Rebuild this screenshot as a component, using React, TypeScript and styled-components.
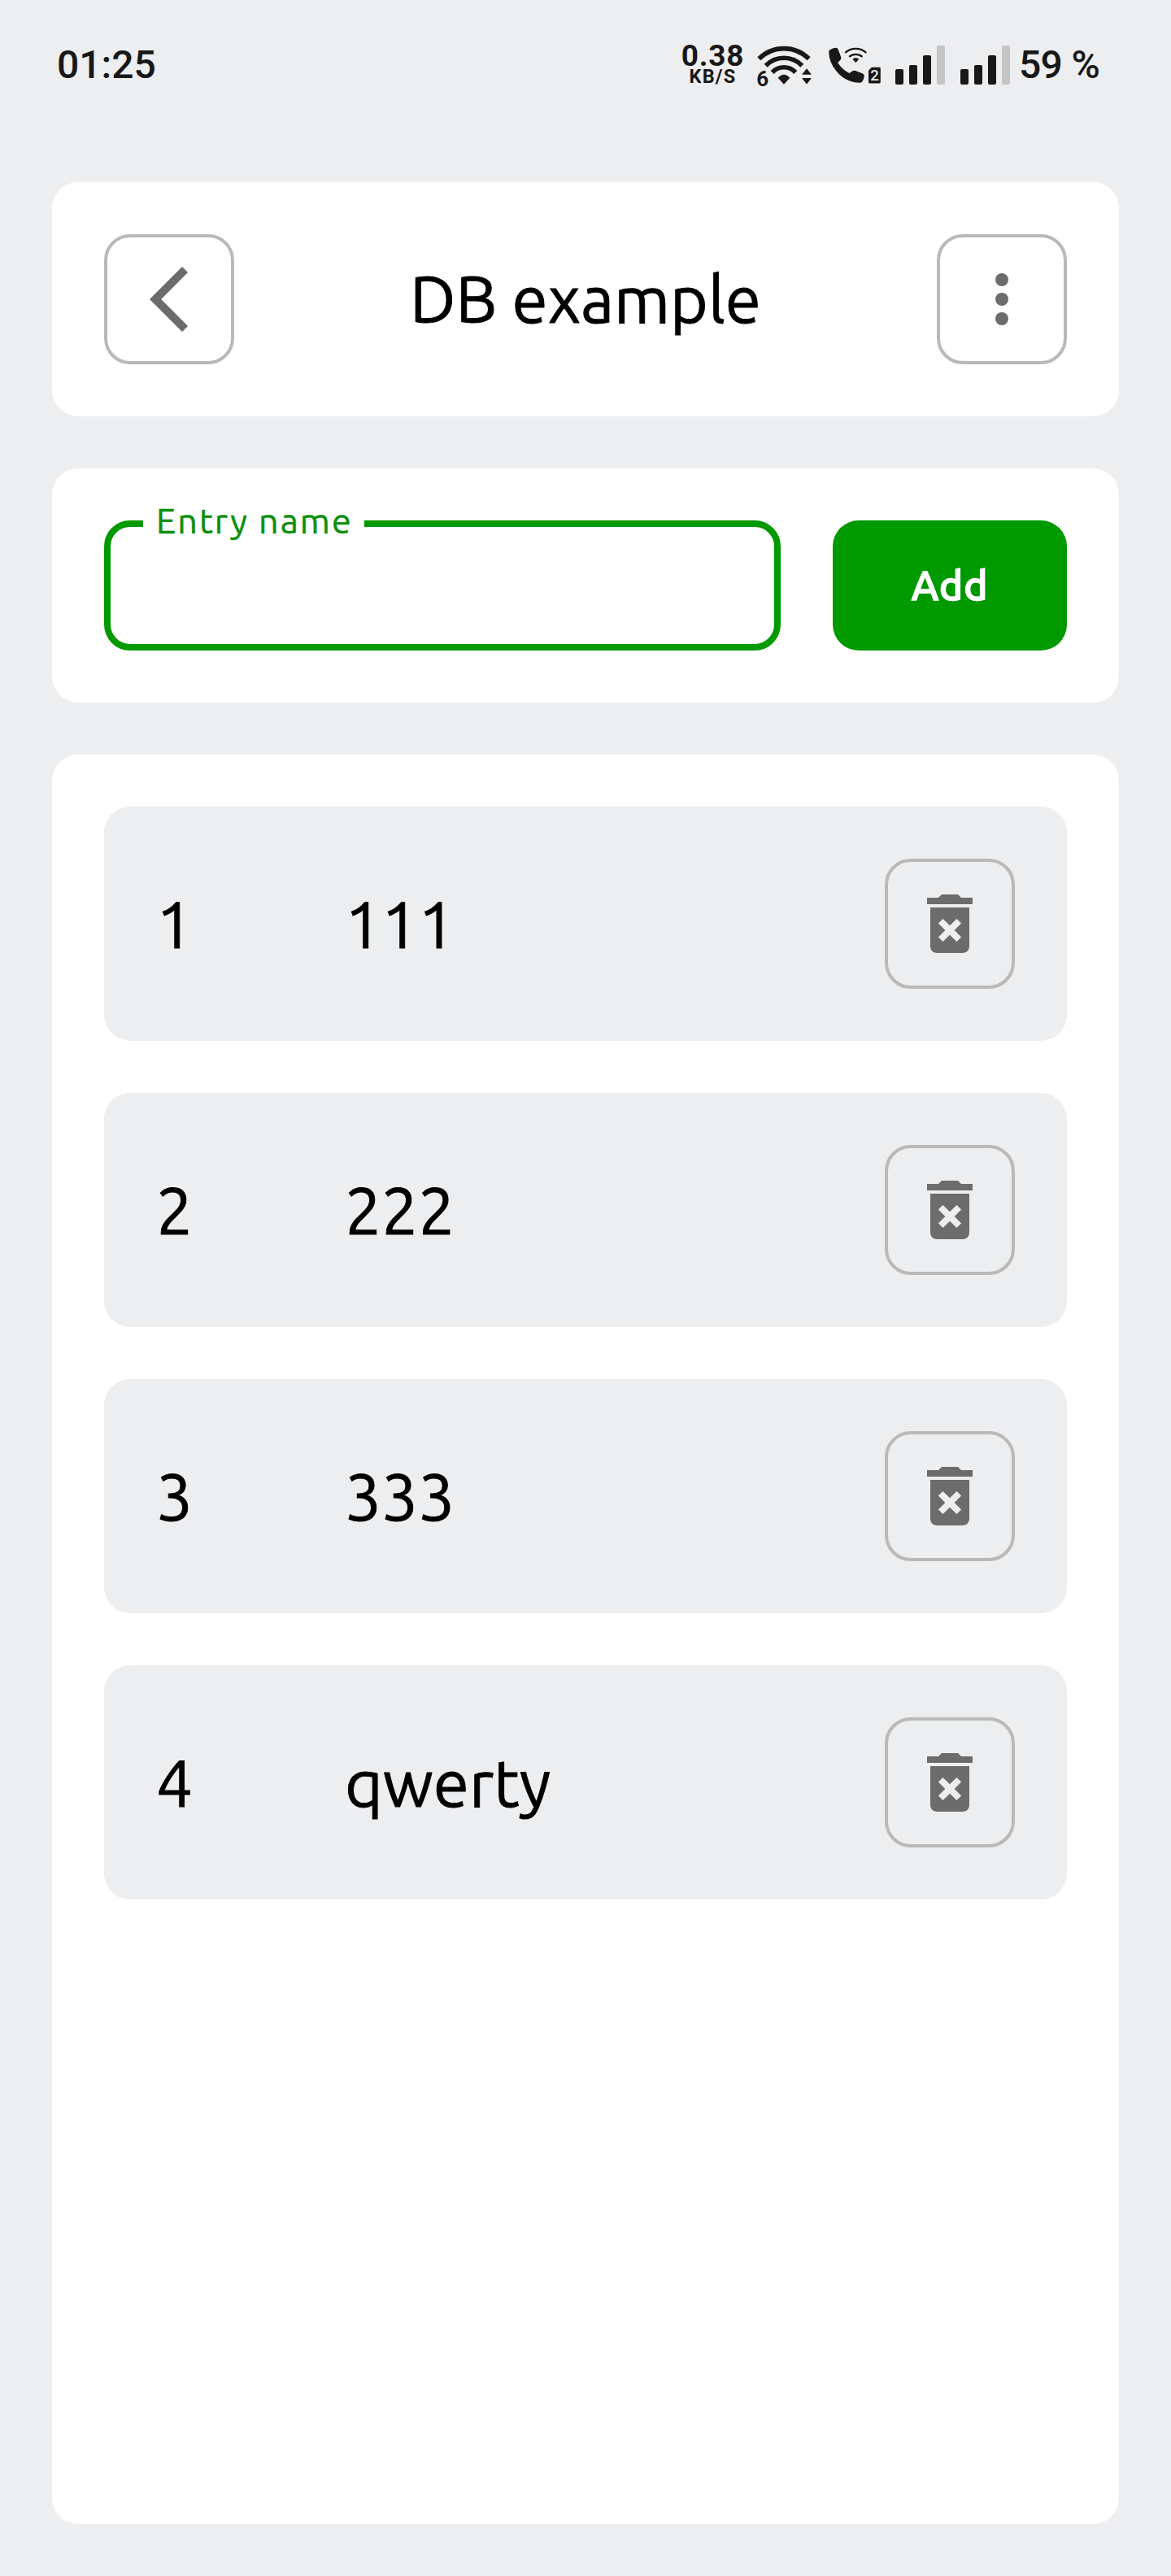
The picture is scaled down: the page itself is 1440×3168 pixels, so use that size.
import React from "react";
import styled, { createGlobalStyle } from "styled-components";

const color = {
  page: "#edeef0",
  card: "#ffffff",
  ink: "#181818",
  text: "#000000",
  outline: "#b9b9b9",
  icon: "#6c6c6c",
  accent: "#009900",
  barOff: "#c4c5c7",
};

const GlobalStyle = createGlobalStyle`
  *, *::before, *::after { box-sizing: border-box; }
  body { margin: 0; background: ${color.page}; }
  button { font: inherit; padding: 0; margin: 0; cursor: pointer; }
`;

const Screen = styled.div`
  display: flex;
  flex-direction: column;
  width: 1440px;
  height: 3168px;
  background: ${color.page};
  color: ${color.text};
  font-family: Ubuntu, "Noto Sans", "Open Sans", sans-serif;
`;

const StatusBar = styled.header`
  display: flex;
  align-items: center;
  justify-content: space-between;
  height: 160px;
  padding: 0 87px 0 70px;
  color: ${color.ink};
  font-family: Roboto, sans-serif;
  font-weight: 500;
`;

const StatusText = styled.span<{ $spacing?: number }>`
  font-size: 48px;
  line-height: 56px;
  white-space: pre;
  letter-spacing: ${(p) => p.$spacing ?? 0}px;
`;

const StatusGroup = styled.div`
  display: flex;
  align-items: center;
  width: 515px;
`;

const Speed = styled.div`
  display: flex;
  flex-direction: column;
  align-items: center;
  width: 77px;
  margin-right: 15px;
  white-space: nowrap;
`;

const SpeedValue = styled.span`
  margin: -1px 0 1px;
  font-size: 37px;
  line-height: 28px;
  font-weight: 700;
  letter-spacing: 0.8px;
`;

const SpeedUnit = styled.span`
  font-size: 23.5px;
  line-height: 20px;
  font-weight: 700;
  letter-spacing: 1.2px;
`;

const Glyph = styled.svg<{ $gap?: number }>`
  display: block;
  flex: none;
  margin-right: ${(p) => p.$gap ?? 0}px;
`;

const Signal = styled.div<{ $gap: number }>`
  display: flex;
  align-items: flex-end;
  gap: 7px;
  height: 48px;
  margin-right: ${(p) => p.$gap}px;
`;

const Bar = styled.i<{ $height: number; $off?: boolean }>`
  width: 10px;
  height: ${(p) => p.$height}px;
  border-radius: 2px;
  background: ${(p) => (p.$off ? color.barOff : color.ink)};
`;

const Content = styled.main`
  display: flex;
  flex: 1;
  flex-direction: column;
  gap: 64px;
  padding: 64px;
`;

const Card = styled.section`
  display: flex;
  align-items: center;
  justify-content: space-between;
  height: 288px;
  padding: 64px;
  border-radius: 32px;
  background: ${color.card};
`;

const Title = styled.h1`
  margin: 0;
  padding-bottom: 2px;
  font-size: 80px;
  line-height: 104px;
  font-weight: 400;
  white-space: nowrap;
  -webkit-text-stroke: 0.9px currentColor;
`;

const IconButton = styled.button`
  display: flex;
  flex: none;
  align-items: center;
  justify-content: center;
  width: 160px;
  height: 160px;
  border: 4px solid ${color.outline};
  border-radius: 32px;
  background: transparent;
  color: ${color.icon};
`;

const Field = styled.fieldset`
  width: 832px;
  height: 182px;
  margin: -22px 0 0;
  padding: 0 0 0 40px;
  border: 8px solid ${color.accent};
  border-radius: 32px;
`;

const FieldLabel = styled.legend`
  width: 272px;
  height: 52px;
  padding: 0 0 0 16px;
  color: #0d8f0d;
  font-size: 43px;
  line-height: 44px;
  letter-spacing: 2.1px;
  white-space: nowrap;
  -webkit-text-stroke: 0.5px currentColor;
`;

const AddButton = styled.button`
  width: 288px;
  height: 160px;
  padding-bottom: 2px;
  border: 0;
  border-radius: 32px;
  background: ${color.accent};
  color: #ffffff;
  -webkit-text-stroke: 1.4px currentColor;
  && {
    font-size: 50px;
    font-weight: 500;
    letter-spacing: 0.6px;
  }
`;

const List = styled.ul`
  display: flex;
  flex: 1;
  flex-direction: column;
  gap: 64px;
  margin: 0;
  padding: 64px;
  border-radius: 32px;
  background: ${color.card};
  list-style: none;
`;

const Row = styled.li`
  display: grid;
  grid-template-columns: 232px 1fr 160px;
  align-items: center;
  height: 288px;
  padding: 0 64px;
  border-radius: 32px;
  background: ${color.page};
  font-size: 80px;
  line-height: 108px;
  -webkit-text-stroke: 0.9px currentColor;
`;

const WifiGlyph = () => (
  <Glyph width="72" height="60" viewBox="0 0 72 60" $gap={14}>
    <g fill="none" stroke={color.ink} strokeWidth="5.6">
      <path d="M3.3 22.3A43.4 43.4 0 0 1 64.7 22.3" />
      <path d="M11.7 30.7A31 31 0 0 1 56.3 30.7" />
      <path d="M19.7 39A19.4 19.4 0 0 1 48.3 39" />
    </g>
    <g fill={color.ink}>
      <path d="M26.7 45.7Q34 38 41.3 45.7L34 53.8Z" />
      <path d="M56 41.8L62 34.3L68 41.8ZM56 46H68L62 53.4Z" />
      <text x="0.3" y="55.5" fontFamily="Roboto, sans-serif" fontSize="26" fontWeight="700">
        6
      </text>
    </g>
  </Glyph>
);

const CallGlyph = () => (
  <Glyph width="68" height="60" viewBox="0 0 68 60" $gap={17}>
    <path
      fill={color.ink}
      d="M5 11Q8 9 11.5 8.7Q14 8.6 14.8 11L18.3 20.5Q18.8 22.5 17 24.2L14.2 27Q19.5 35.5 28.5 40L32 37.4Q34 36.3 36 37L45 40.4Q47 41.3 46.8 43.5Q46.4 47.5 44.3 50.5Q43 51.7 41 51.7Q24 51.5 12.5 37.5Q3.5 27 3.2 14Q3.2 12 5 11Z"
    />
    <g fill="none" stroke={color.ink} strokeWidth="2.3">
      <path d="M23.3 15A19 19 0 0 1 49.3 15" />
      <path d="M28.2 19.8A12.5 12.5 0 0 1 44.5 19.8" />
    </g>
    <path fill={color.ink} d="M32.3 22.8Q36.3 19.2 40.3 22.8L36.3 26.9Z" />
    <path fill={color.ink} d="M56 32.7H65.4Q66.8 32.7 66.8 34V51Q66.8 52.4 65.4 52.4H53.4Q52 52.4 52 51V36.7Z" />
    <text
      x="59.6"
      y="49.2"
      textAnchor="middle"
      fill={color.page}
      fontFamily="Roboto, sans-serif"
      fontSize="18.5"
      fontWeight="500"
    >
      2
    </text>
  </Glyph>
);

const SignalBars = ({ gap }: { gap: number }) => (
  <Signal $gap={gap}>
    <Bar $height={19} />
    <Bar $height={24} />
    <Bar $height={36} />
    <Bar $height={48} $off />
  </Signal>
);

const BackIcon = () => (
  <svg width="152" height="152" viewBox="4 4 152 152" fill="currentColor">
    <path d="M96 40l7 7-32.8 33L103 113l-7 7L56 80z" />
  </svg>
);

const MoreIcon = () => (
  <svg width="96" height="96" viewBox="0 0 24 24" fill="currentColor">
    <circle cx="12" cy="6" r="2" />
    <circle cx="12" cy="12" r="2" />
    <circle cx="12" cy="18" r="2" />
  </svg>
);

const DeleteIcon = () => (
  <svg width="96" height="96" viewBox="0 0 24 24" fill="currentColor">
    <path d="M6 19c0 1.1.9 2 2 2h8c1.1 0 2-.9 2-2V7H6v12zm2.46-7.12l1.41-1.41L12 12.59l2.12-2.12 1.41 1.41L13.41 14l2.12 2.12-1.41 1.41L12 15.41l-2.12 2.12-1.41-1.41L10.59 14l-2.13-2.12zM15.5 4l-1-1h-5l-1 1H5v2h14V4h-3.5z" />
  </svg>
);

const entries = [
  { id: 1, name: "111" },
  { id: 2, name: "222" },
  { id: 3, name: "333" },
  { id: 4, name: "qwerty" },
];

export default function App() {
  return (
    <Screen>
      <GlobalStyle />
      <StatusBar>
        <StatusText>01:25</StatusText>
        <StatusGroup>
          <Speed>
            <SpeedValue>0.38</SpeedValue>
            <SpeedUnit>KB/S</SpeedUnit>
          </Speed>
          <WifiGlyph />
          <CallGlyph />
          <SignalBars gap={19} />
          <SignalBars gap={11} />
          <StatusText $spacing={-0.7}>59 %</StatusText>
        </StatusGroup>
      </StatusBar>
      <Content>
        <Card>
          <IconButton aria-label="Back">
            <BackIcon />
          </IconButton>
          <Title>DB example</Title>
          <IconButton aria-label="More">
            <MoreIcon />
          </IconButton>
        </Card>
        <Card>
          <Field>
            <FieldLabel>Entry name</FieldLabel>
          </Field>
          <AddButton>Add</AddButton>
        </Card>
        <List>
          {entries.map((entry) => (
            <Row key={entry.id}>
              <span>{entry.id}</span>
              <span>{entry.name}</span>
              <IconButton aria-label="Delete">
                <DeleteIcon />
              </IconButton>
            </Row>
          ))}
        </List>
      </Content>
    </Screen>
  );
}
